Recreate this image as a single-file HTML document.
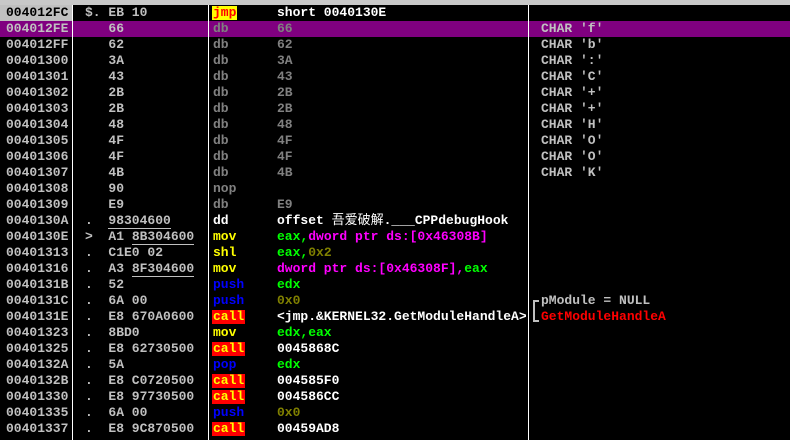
<!DOCTYPE html>
<html><head><meta charset="utf-8"><style>
*{margin:0;padding:0}
body{width:792px;height:440px;background:#fff;overflow:hidden;position:relative;font-family:"Liberation Mono","WenQuanYi Zen Hei",monospace;font-weight:bold;font-size:13px}
#top{position:absolute;left:0;top:0;width:790px;height:5px;background:#c8c8c8}
#bg{position:absolute;left:0;top:5px;width:790px;height:435px;background:#000}
.vl{position:absolute;top:5px;height:435px;width:1px;background:#fff}
.r{position:absolute;left:0;width:790px;height:16px;line-height:16px;color:#c0c0c0;white-space:pre}
.r span{position:absolute;top:0}
.a{left:6px}.h{left:85px}.m{left:213px}.o{left:277px;width:250px;overflow:hidden}.c{left:541px}
.g{color:#808080}.w{color:#fff}.y{color:#ffff00}.b{color:#0000ff}.gr{color:#00ff00}.mg{color:#ff00ff}.ol{color:#808000}.rd{color:#ff0000}
.call{background:#ff0000;color:#ffff00;padding:0 1px;margin-left:-1px;line-height:14px;top:1px!important}
.jmp{background:#ffff00;color:#ff0000;padding:0 1px;margin-left:-1px;line-height:14px;top:1px!important}
u{text-decoration:none;border-bottom:1px solid #c0c0c0}
.cj{font-weight:normal}
</style></head><body>
<div id="top"></div><div id="bg"></div>
<div class="r" style="top:5px"><span style="left:0;top:0;width:72px;height:16px;background:#c0c0c0"></span><span class="a" style="color:#000">004012FC</span><span class="h">$. EB 10</span><span class="m jmp">jmp</span><span class="o w">short 0040130E</span></div>
<div class="r" style="top:21px;background:#800080"><span class="a">004012FE</span><span class="h">   66</span><span class="m g">db</span><span class="o g">66</span><span class="c">CHAR 'f'</span></div>
<div class="r" style="top:37px"><span class="a">004012FF</span><span class="h">   62</span><span class="m g">db</span><span class="o g">62</span><span class="c">CHAR 'b'</span></div>
<div class="r" style="top:53px"><span class="a">00401300</span><span class="h">   3A</span><span class="m g">db</span><span class="o g">3A</span><span class="c">CHAR ':'</span></div>
<div class="r" style="top:69px"><span class="a">00401301</span><span class="h">   43</span><span class="m g">db</span><span class="o g">43</span><span class="c">CHAR 'C'</span></div>
<div class="r" style="top:85px"><span class="a">00401302</span><span class="h">   2B</span><span class="m g">db</span><span class="o g">2B</span><span class="c">CHAR '+'</span></div>
<div class="r" style="top:101px"><span class="a">00401303</span><span class="h">   2B</span><span class="m g">db</span><span class="o g">2B</span><span class="c">CHAR '+'</span></div>
<div class="r" style="top:117px"><span class="a">00401304</span><span class="h">   48</span><span class="m g">db</span><span class="o g">48</span><span class="c">CHAR 'H'</span></div>
<div class="r" style="top:133px"><span class="a">00401305</span><span class="h">   4F</span><span class="m g">db</span><span class="o g">4F</span><span class="c">CHAR 'O'</span></div>
<div class="r" style="top:149px"><span class="a">00401306</span><span class="h">   4F</span><span class="m g">db</span><span class="o g">4F</span><span class="c">CHAR 'O'</span></div>
<div class="r" style="top:165px"><span class="a">00401307</span><span class="h">   4B</span><span class="m g">db</span><span class="o g">4B</span><span class="c">CHAR 'K'</span></div>
<div class="r" style="top:181px"><span class="a">00401308</span><span class="h">   90</span><span class="m g">nop</span></div>
<div class="r" style="top:197px"><span class="a">00401309</span><span class="h">   E9</span><span class="m g">db</span><span class="o g">E9</span></div>
<div class="r" style="top:213px"><span class="a">0040130A</span><span class="h">.  <u>98304600</u></span><span class="m w">dd</span><span class="o w">offset <b class="cj">吾爱破解</b>.___CPPdebugHook</span></div>
<div class="r" style="top:229px"><span class="a">0040130E</span><span class="h">&gt;  A1 <u>8B304600</u></span><span class="m y">mov</span><span class="o"><b class="gr">eax,</b><b class="mg">dword ptr ds:[0x46308B]</b></span></div>
<div class="r" style="top:245px"><span class="a">00401313</span><span class="h">.  C1E0 02</span><span class="m y">shl</span><span class="o"><b class="gr">eax,</b><b class="ol">0x2</b></span></div>
<div class="r" style="top:261px"><span class="a">00401316</span><span class="h">.  A3 <u>8F304600</u></span><span class="m y">mov</span><span class="o"><b class="mg">dword ptr ds:[0x46308F],</b><b class="gr">eax</b></span></div>
<div class="r" style="top:277px"><span class="a">0040131B</span><span class="h">.  52</span><span class="m b">push</span><span class="o gr">edx</span></div>
<div class="r" style="top:293px"><span class="a">0040131C</span><span class="h">.  6A 00</span><span class="m b">push</span><span class="o ol">0x0</span><span class="c">pModule = NULL</span></div>
<div class="r" style="top:309px"><span class="a">0040131E</span><span class="h">.  E8 670A0600</span><span class="m call">call</span><span class="o w" style="width:249px">&lt;jmp.&amp;KERNEL32.GetModuleHandleA&gt;</span><span class="c rd">GetModuleHandleA</span></div>
<div class="r" style="top:325px"><span class="a">00401323</span><span class="h">.  8BD0</span><span class="m y">mov</span><span class="o gr">edx,eax</span></div>
<div class="r" style="top:341px"><span class="a">00401325</span><span class="h">.  E8 62730500</span><span class="m call">call</span><span class="o w">0045868C</span></div>
<div class="r" style="top:357px"><span class="a">0040132A</span><span class="h">.  5A</span><span class="m b">pop</span><span class="o gr">edx</span></div>
<div class="r" style="top:373px"><span class="a">0040132B</span><span class="h">.  E8 C0720500</span><span class="m call">call</span><span class="o w">004585F0</span></div>
<div class="r" style="top:389px"><span class="a">00401330</span><span class="h">.  E8 97730500</span><span class="m call">call</span><span class="o w">004586CC</span></div>
<div class="r" style="top:405px"><span class="a">00401335</span><span class="h">.  6A 00</span><span class="m b">push</span><span class="o ol">0x0</span></div>
<div class="r" style="top:421px"><span class="a">00401337</span><span class="h">.  E8 9C870500</span><span class="m call">call</span><span class="o w">00459AD8</span></div>
<div style="position:absolute;left:533px;top:300px;width:4px;height:9px;border-left:2px solid #c0c0c0;border-top:2px solid #c0c0c0"></div>
<div style="position:absolute;left:533px;top:311px;width:4px;height:9px;border-left:2px solid #c0c0c0;border-bottom:2px solid #c0c0c0"></div>
<div class="vl" style="left:72px"></div><div class="vl" style="left:208px"></div><div class="vl" style="left:528px"></div>
</body></html>
